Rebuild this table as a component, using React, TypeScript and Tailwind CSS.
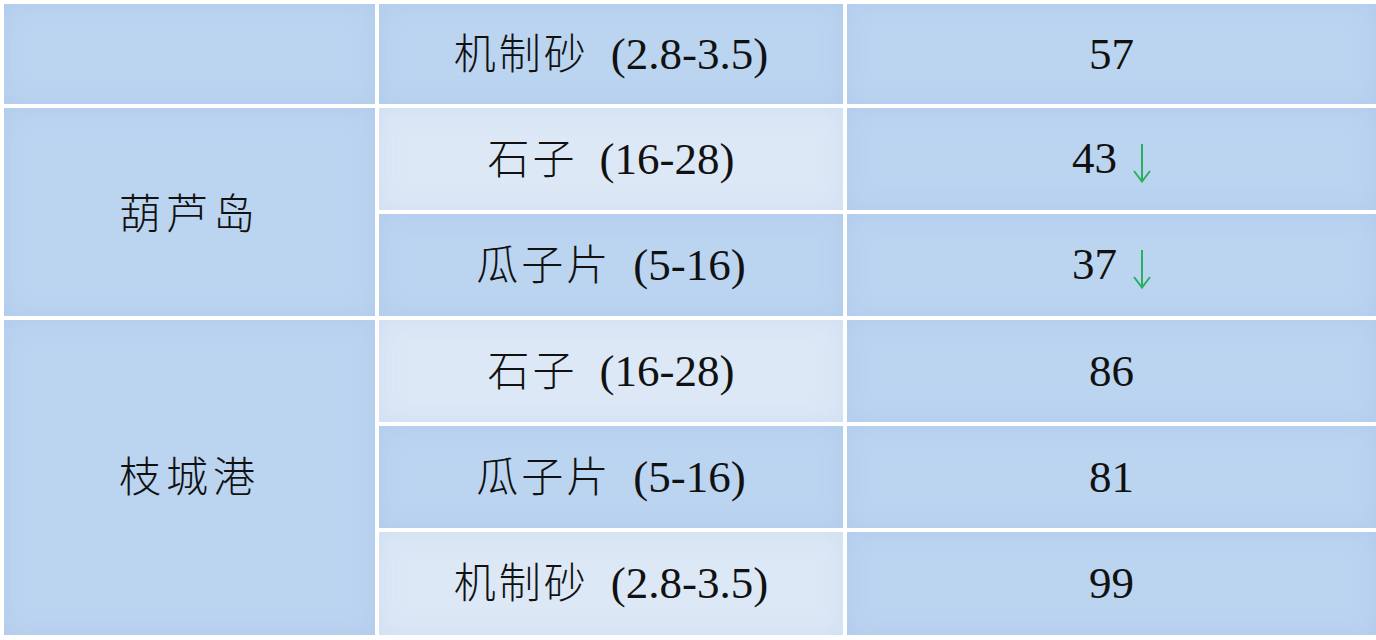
const dark = 'bg-[#bbd4f0] shadow-[inset_0_0_24px_rgba(160,190,228,0.4)]';
const light = 'bg-[#dce8f6] shadow-[inset_0_0_24px_rgba(190,210,238,0.45)]';

function Arrow() {
  return (
    <svg width="18" height="40" viewBox="0 0 18 40" className="inline-block align-[-10px] ml-[16px]">
      <line x1="9" y1="1" x2="9" y2="38" stroke="#2bb060" strokeWidth="2" />
      <polyline points="1,28 9,38.5 17,28" fill="none" stroke="#2bb060" strokeWidth="2" />
    </svg>
  );
}

function Spec({ name, size }: { name: string; size: string }) {
  return (
    <span className="whitespace-nowrap">
      <span className="tracking-[3px] font-light text-[42px]">{name}</span>
      <span className="ml-[22px]">{size}</span>
    </span>
  );
}

const rows = [
  { name: '机制砂', size: '(2.8-3.5)', value: '57', down: false, shade: dark },
  { name: '石子', size: '(16-28)', value: '43', down: true, shade: light },
  { name: '瓜子片', size: '(5-16)', value: '37', down: true, shade: dark },
  { name: '石子', size: '(16-28)', value: '86', down: false, shade: light },
  { name: '瓜子片', size: '(5-16)', value: '81', down: false, shade: dark },
  { name: '机制砂', size: '(2.8-3.5)', value: '99', down: false, shade: light },
];

const rowStart = ['row-start-1', 'row-start-2', 'row-start-3', 'row-start-4', 'row-start-5', 'row-start-6'];

export default function App() {
  return (
    <div
      className="w-[1376px] h-[640px] bg-white pl-[4px] pt-[4px] overflow-hidden text-[45px] text-[#111] leading-none"
      style={{ fontFamily: '"Liberation Serif", "Noto Sans CJK SC", serif' }}
    >
      <div className="grid grid-cols-[371px_464px_1fr] grid-rows-[100px_102px_102px_102px_102px_103px] gap-[4px]">
        <div className={`col-start-1 row-start-1 ${dark}`} />
        <div className={`col-start-1 row-start-2 row-span-2 flex items-center justify-center tracking-[5px] font-light text-[42px] pt-[6px] ${dark}`}>
          葫芦岛
        </div>
        <div className={`col-start-1 row-start-4 row-span-3 flex items-center justify-center tracking-[5px] font-light text-[42px] ${dark}`}>
          枝城港
        </div>
        {rows.map((r, i) => (
          <div key={`s${i}`} className={`col-start-2 ${rowStart[i]} flex items-center justify-center ${r.shade}`}>
            <Spec name={r.name} size={r.size} />
          </div>
        ))}
        {rows.map((r, i) => (
          <div key={`v${i}`} className={`col-start-3 ${rowStart[i]} flex items-center justify-center ${dark}`}>
            <span className="whitespace-nowrap">
              {r.value}
              {r.down && <Arrow />}
            </span>
          </div>
        ))}
      </div>
    </div>
  );
}
